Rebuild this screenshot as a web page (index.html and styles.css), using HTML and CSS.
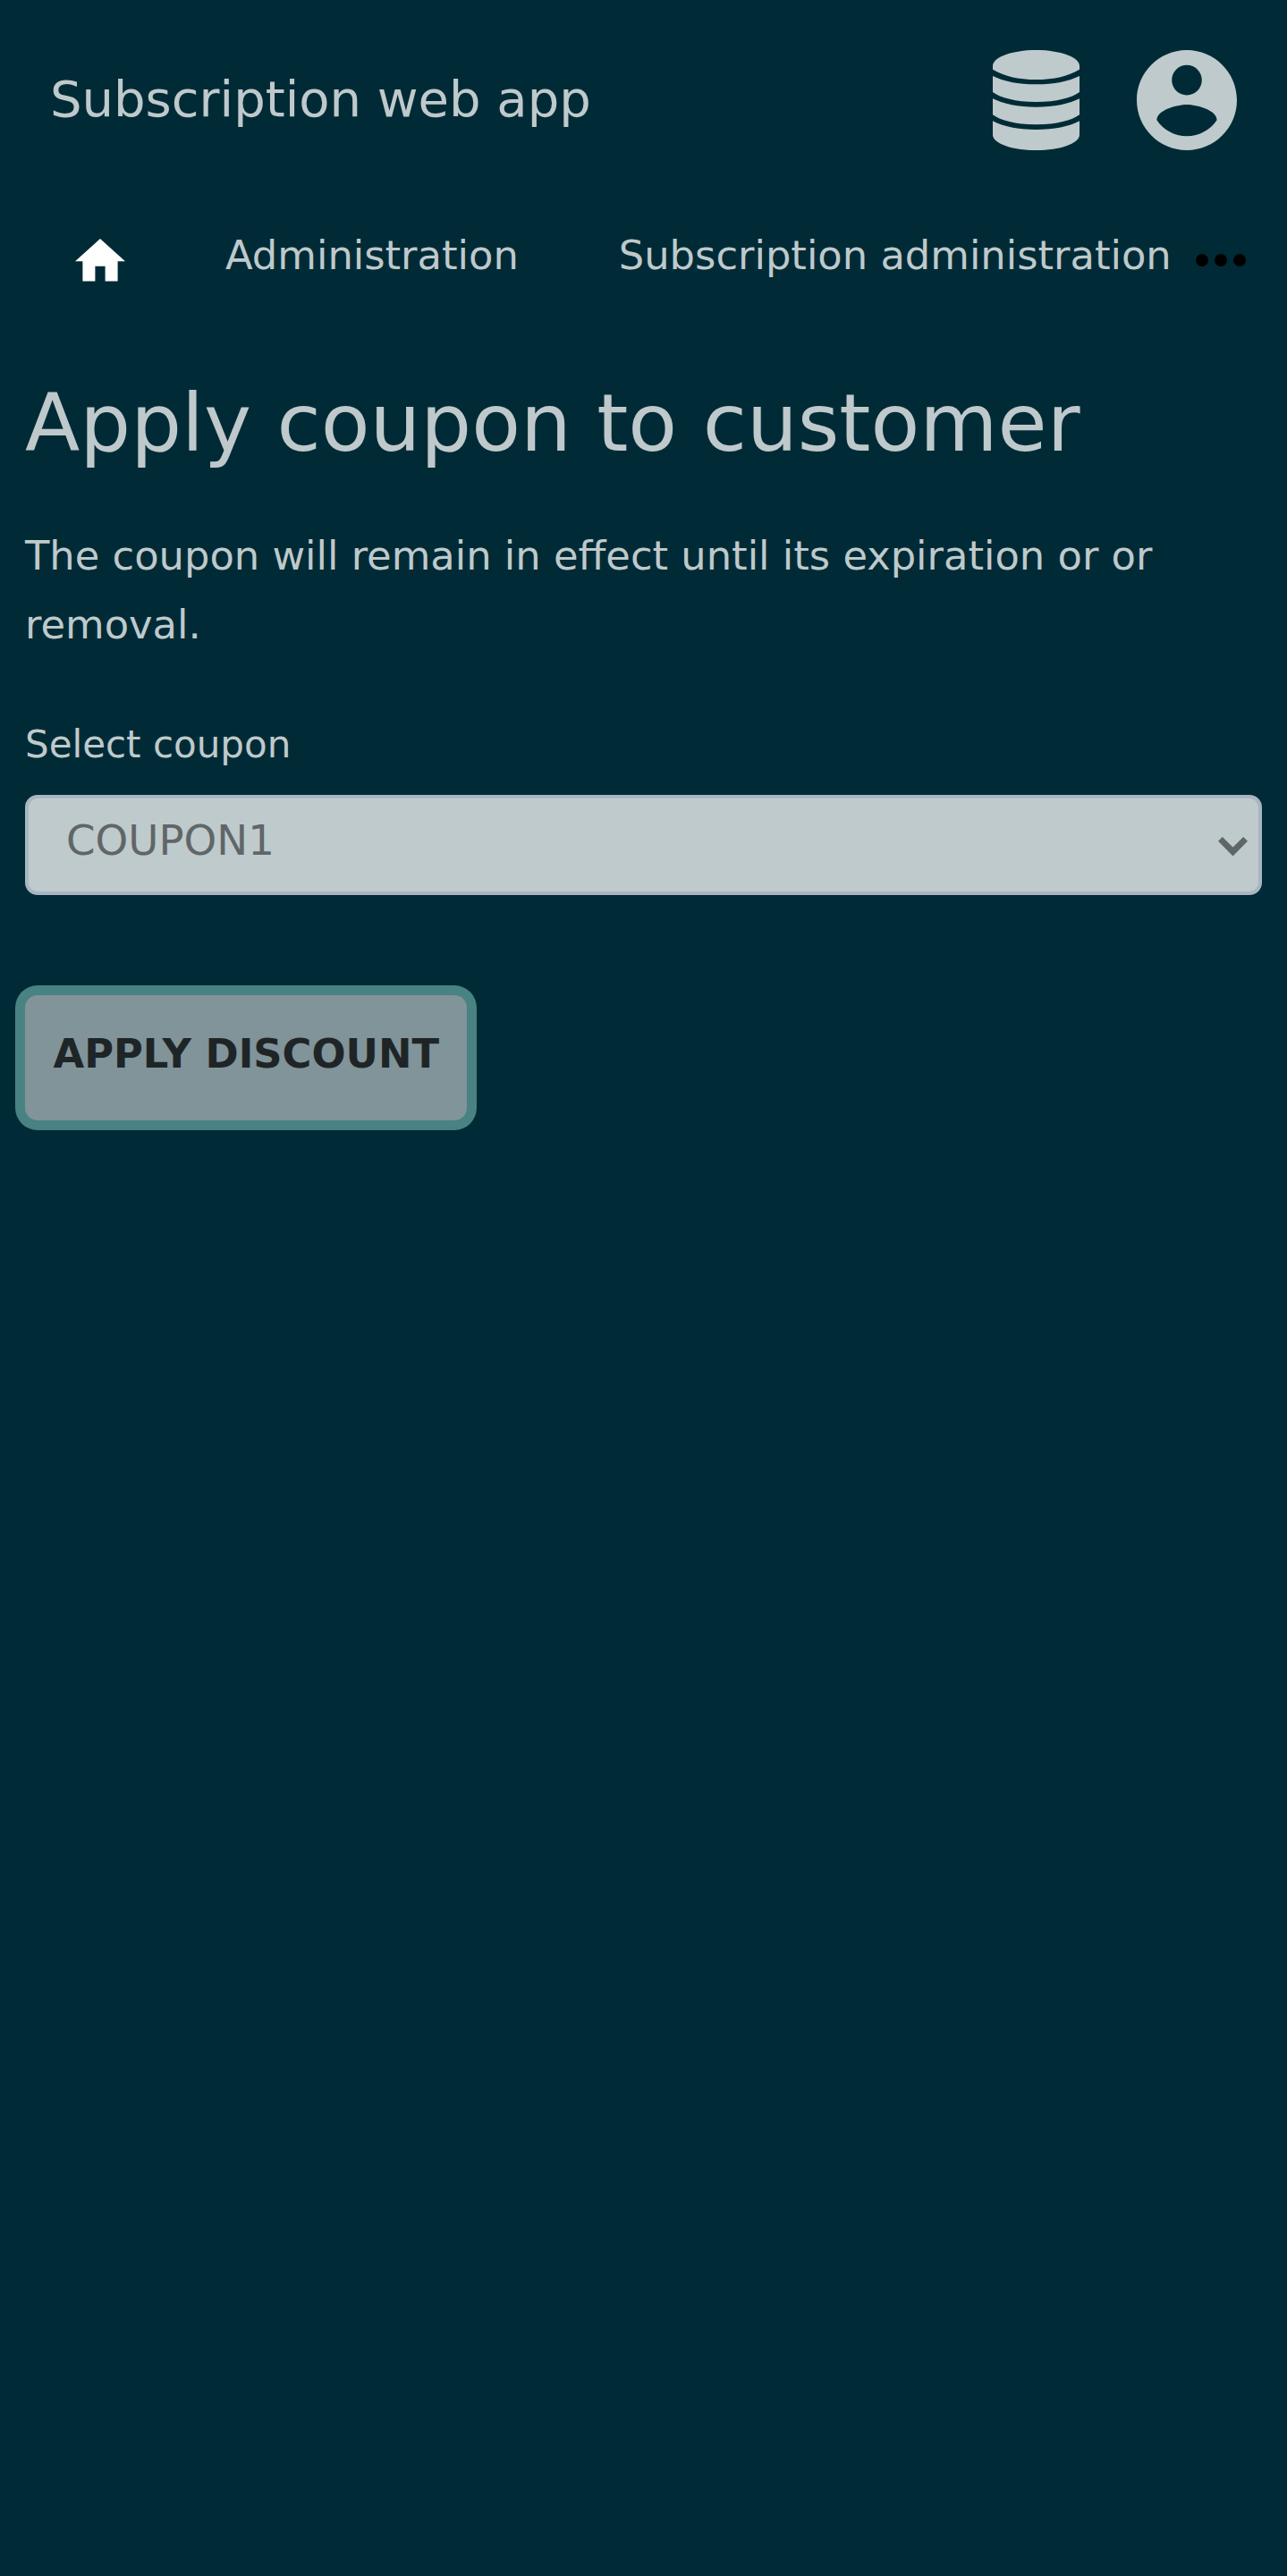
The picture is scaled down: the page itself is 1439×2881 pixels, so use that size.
FILE: index.html
```
<!DOCTYPE html>
<html lang="en">
<head>
<meta charset="utf-8">
<title>Subscription web app</title>
<link rel="stylesheet" href="styles.css">
</head>
<body>
<header class="header">
  <div class="brand">Subscription web app</div>
  <div class="tools">
    <svg class="database" viewBox="0 0 291 336">
      <path d="M0 53C0 24 65 0 145.500 0S291 24 291 53V65C255 87 205 99 145.500 99S36 87 0 65Z"/>
      <path id="band" d="M0 87C36 105 85 115 145.500 115S255 105 291 87V141C265 160 215 174 145.500 174S26 160 0 141Z"/>
      <use href="#band" y="76"/>
      <path d="M0 238C36 257 85 267 145.500 267S255 257 291 238V284C291 313 226 336 145.500 336S0 313 0 284Z"/>
    </svg>
    <svg class="account" viewBox="2 2 20 20"><path d="M12 2C6.480 2 2 6.480 2 12s4.480 10 10 10 10-4.480 10-10S17.520 2 12 2zm0 3c1.660 0 3 1.340 3 3s-1.340 3-3 3-3-1.340-3-3 1.340-3 3-3zm0 14.200c-2.500 0-4.710-1.280-6-3.220.030-1.990 4-3.080 6-3.080 1.990 0 5.970 1.090 6 3.080-1.290 1.940-3.500 3.220-6 3.220z"/></svg>
  </div>
</header>
<nav class="nav">
  <svg class="home" viewBox="2 3 20 17"><path d="M10 20v-6h4v6h5v-8h3L12 3 2 12h3v8z"/></svg>
  <span class="link">Administration</span>
  <span class="link">Subscription administration</span>
  <svg class="more" viewBox="0 0 56 14"><circle cx="7" cy="7" r="7"/><circle cx="28" cy="7" r="7"/><circle cx="49" cy="7" r="7"/></svg>
</nav>
<main class="content">
  <h1 class="title">Apply coupon to customer</h1>
  <p class="note">The coupon will remain in effect until its expiration or or removal.</p>
  <div class="label">Select coupon</div>
  <div class="select">
    <span>COUPON1</span>
    <svg class="chevron" viewBox="0 0 33 22"><path d="M4.800 0 16.500 11.500 28.200 0 33 4.800 16.500 21.500 0 4.800Z"/></svg>
  </div>
  <button class="apply">APPLY DISCOUNT</button>
</main>
</body>
</html>
```
FILE: styles.css
```
* {
  box-sizing: border-box;
}

body {
  margin: 0;
  min-height: 2881px;
  background: #002b36;
  color: #bfc9cb;
  font-family: "DejaVu Sans", sans-serif;
  font-size: 44.8px;
}

.header {
  display: flex;
  justify-content: space-between;
  align-items: center;
  height: 224px;
  padding: 0 56.5px 0 56px;
}

.brand {
  padding-bottom: 3px;
  font-size: 56px;
  line-height: 66px;
}

.tools {
  display: flex;
  gap: 64px;
}

.database {
  width: 97px;
  height: 112px;
  fill: #bfcacc;
}

.account {
  width: 112px;
  height: 112px;
  fill: #bfcacc;
}

.nav {
  display: flex;
  height: 124px;
  padding: 34px 46px 0 84px;
  line-height: 56px;
  white-space: nowrap;
}

.home {
  flex: none;
  width: 56px;
  height: 47.6px;
  margin: 9px 0 0;
  fill: #fff;
}

.link {
  margin-left: 112px;
}

.more {
  flex: none;
  width: 56px;
  height: 14px;
  margin: 25.5px 0 0 auto;
  fill: #000;
}

.content {
  padding: 63px 28px 0;
}

.title {
  margin: 0;
  font-size: 89.6px;
  font-weight: 400;
  line-height: 124px;
}

.note {
  margin: 48px 0 0;
  line-height: 77px;
}

.label {
  margin-top: 66px;
  font-size: 42px;
  line-height: 60px;
}

.select {
  display: flex;
  justify-content: space-between;
  align-items: flex-start;
  height: 112px;
  margin-top: 26px;
  padding: 17px 12.5px 0 42px;
  border: 4px solid #a9b5c3;
  border-radius: 14px;
  background: #bfcacc;
  color: #606668;
  font-size: 46.67px;
  line-height: 60px;
}

.chevron {
  width: 33px;
  height: 22px;
  margin-top: 25.5px;
  fill: #606668;
}

.apply {
  display: block;
  width: 493.5px;
  height: 140px;
  margin-top: 112px;
  padding: 0 0 9px 1px;
  border: 0;
  border-radius: 14px;
  background: #80949a;
  box-shadow: 0 0 0 11px #488282;
  color: #1f2527;
  font: bold 44.8px "DejaVu Sans", sans-serif;
}
```
